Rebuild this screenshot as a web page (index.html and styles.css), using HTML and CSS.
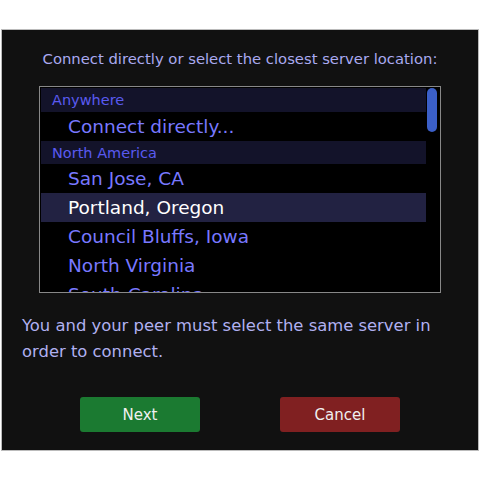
FILE: index.html
```html
<!DOCTYPE html>
<html lang="en">
<head>
  <meta charset="UTF-8">
  <title>Select Server</title>
  <link rel="stylesheet" href="styles.css">
</head>
<body>
  <div class="dialog">
    <p class="prompt">Connect directly or select the closest server location:</p>

    <div class="server-list">
      <div class="items">
        <div class="group">Anywhere</div>
        <div class="item">Connect directly...</div>
        <div class="group">North America</div>
        <div class="item">San Jose, CA</div>
        <div class="item selected">Portland, Oregon</div>
        <div class="item">Council Bluffs, Iowa</div>
        <div class="item">North Virginia</div>
        <div class="item">South Carolina</div>
      </div>
      <div class="track"><div class="thumb"></div></div>
    </div>

    <p class="note">You and your peer must select the same server in order to connect.</p>

    <div class="buttons">
      <button class="btn next">Next</button>
      <button class="btn cancel">Cancel</button>
    </div>
  </div>
</body>
</html>
```
FILE: styles.css
```css
body {
  margin: 0;
  padding-top: 29px;
  background: #fff;
  font-family: "Comic Sans MS", "DejaVu Sans", sans-serif;
}
.dialog {
  margin: 0 1px;
  background: #111;
  border: 1px solid #bbb;
  padding: 20px 0 18px;
}
.prompt {
  margin: 0 0 18px;
  text-align: center;
  font-size: 14.8px;
  line-height: 18px;
  color: #aaaaf0;
  white-space: nowrap;
}
.server-list {
  display: flex;
  margin: 0 37px 0 37px;
  height: 205px;
  background: #000;
  border: 1px solid #888;
  overflow: hidden;
}
.items {
  flex: 1;
  padding: 1px 0 0 1px;
}
.group {
  height: 23.5px;
  line-height: 24px;
  padding-left: 11px;
  background: #13132a;
  color: #5a5af0;
  font-size: 14.5px;
}
.item {
  height: 29px;
  line-height: 29px;
  padding-left: 27px;
  color: #7878ff;
  font-size: 18.5px;
  white-space: nowrap;
}
.item.selected {
  background: #222242;
  color: #fff;
}
.track {
  width: 13px;
  padding: 1px 0 0 1px;
}
.thumb {
  width: 10px;
  height: 44px;
  border-radius: 5px;
  background: #3b5fc8;
}
.note {
  margin: 20px 20px 0;
  font-size: 16.4px;
  line-height: 26px;
  color: #b0b0f0;
}
.buttons {
  display: flex;
  justify-content: center;
  gap: 80px;
  margin-top: 32px;
}
.btn {
  width: 120px;
  height: 35px;
  border: none;
  border-radius: 3px;
  color: #f0f0f0;
  font-family: inherit;
  font-size: 15px;
  cursor: pointer;
}
.next {
  background: #1b7a31;
}
.cancel {
  background: #802021;
}
```
